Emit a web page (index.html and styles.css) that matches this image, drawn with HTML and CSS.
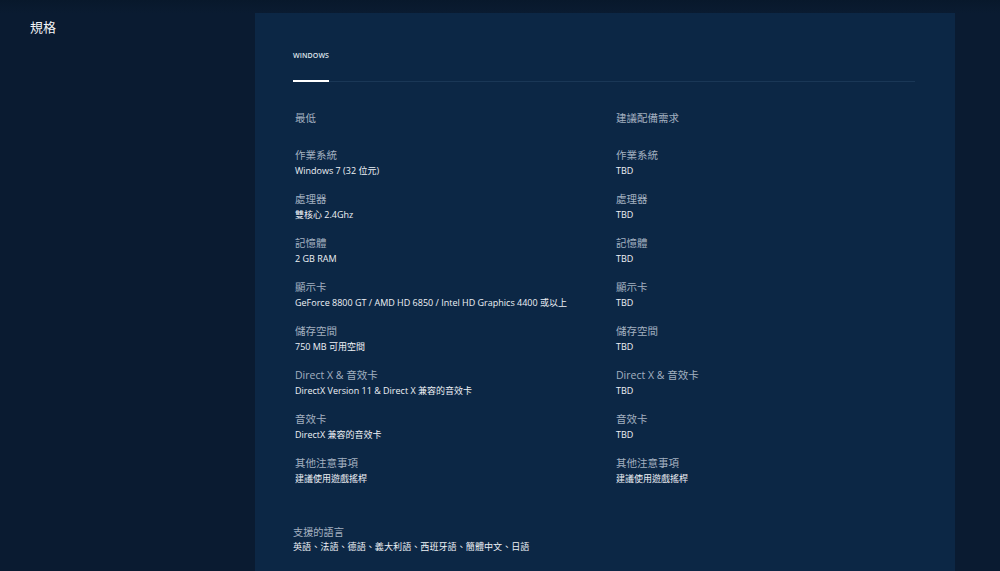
FILE: index.html
```html
<!DOCTYPE html>
<html lang="zh-Hant">
<head>
<meta charset="utf-8">
<title>規格</title>
<link rel="stylesheet" href="styles.css">
</head>
<body>
<div class="page">
  <aside class="side">
    <h1 class="title">規格</h1>
  </aside>
  <main class="panel">
    <nav class="tabs">
      <div class="tab active">WINDOWS</div>
    </nav>
    <div class="cols">
      <section class="col">
        <h2 class="col-head">最低</h2>
        <dl class="specs">
          <div class="spec"><dt>作業系統</dt><dd>Windows 7 (32 位元)</dd></div>
          <div class="spec"><dt>處理器</dt><dd>雙核心 2.4Ghz</dd></div>
          <div class="spec"><dt>記憶體</dt><dd>2 GB RAM</dd></div>
          <div class="spec"><dt>顯示卡</dt><dd>GeForce 8800 GT / AMD HD 6850 / Intel HD Graphics 4400 或以上</dd></div>
          <div class="spec"><dt>儲存空間</dt><dd>750 MB 可用空間</dd></div>
          <div class="spec"><dt>Direct X &amp; 音效卡</dt><dd>DirectX Version 11 &amp; Direct X 兼容的音效卡</dd></div>
          <div class="spec"><dt>音效卡</dt><dd>DirectX 兼容的音效卡</dd></div>
          <div class="spec"><dt>其他注意事項</dt><dd>建議使用遊戲搖桿</dd></div>
        </dl>
      </section>
      <section class="col">
        <h2 class="col-head">建議配備需求</h2>
        <dl class="specs">
          <div class="spec"><dt>作業系統</dt><dd>TBD</dd></div>
          <div class="spec"><dt>處理器</dt><dd>TBD</dd></div>
          <div class="spec"><dt>記憶體</dt><dd>TBD</dd></div>
          <div class="spec"><dt>顯示卡</dt><dd>TBD</dd></div>
          <div class="spec"><dt>儲存空間</dt><dd>TBD</dd></div>
          <div class="spec"><dt>Direct X &amp; 音效卡</dt><dd>TBD</dd></div>
          <div class="spec"><dt>音效卡</dt><dd>TBD</dd></div>
          <div class="spec"><dt>其他注意事項</dt><dd>建議使用遊戲搖桿</dd></div>
        </dl>
      </section>
    </div>
    <div class="langs">
      <div class="langs-label">支援的語言</div>
      <div class="langs-value">英語、法語、德語、義大利語、西班牙語、簡體中文、日語</div>
    </div>
  </main>
</div>
</body>
</html>
```

FILE: styles.css
```css
* { box-sizing: border-box; }
html, body {
  margin: 0;
  padding: 0;
  height: 100%;
}
body {
  background: #0a1b31;
  font-family: "Open Sans", "Noto Sans CJK TC", sans-serif;
  color: #e8ecf1;
  overflow: hidden;
}
.page {
  display: flex;
  height: 571px;
  padding-top: 13px;
  background: linear-gradient(to bottom, #08182b 0, #0a1b31 13px);
}
.side {
  width: 255px;
  flex: none;
  padding-left: 30px;
}
.title {
  margin: 6px 0 0;
  font-size: 13px;
  line-height: 16px;
  font-weight: 400;
  color: #f2f4f7;
}
.panel {
  width: 700px;
  flex: none;
  background: #0c2745;
  padding: 38px 40px 0 38px;
}
.tabs {
  border-bottom: 1px solid #1a3756;
  display: flex;
}
.tab {
  font-size: 7px;
  line-height: 10px;
  font-weight: 600;
  letter-spacing: 0.1px;
  color: #dfe5ec;
  padding-bottom: 19px;
  border-bottom: 2px solid #ffffff;
  margin-bottom: -1px;
  width: 36px;
}
.cols {
  display: flex;
  padding-left: 2px;
  margin-top: 29px;
}
.col {
  width: 321px;
  flex: none;
}
.col-head {
  margin: 0;
  font-size: 10.5px;
  line-height: 14px;
  font-weight: 400;
  color: #a3b0c0;
}
.specs {
  margin: 23px 0 0;
  display: flex;
  flex-direction: column;
  gap: 14px;
}
.spec dt {
  font-size: 10.5px;
  line-height: 14px;
  color: #a3b0c0;
}
.spec dd {
  margin: 2px 0 0;
  font-size: 9px;
  line-height: 14px;
  color: #eef1f5;
  font-weight: 400;
  white-space: nowrap;
}
.langs {
  margin-top: 39px;
}
.langs-label {
  font-size: 10.2px;
  line-height: 14px;
  color: #a3b0c0;
}
.langs-value {
  font-size: 9.1px;
  line-height: 16px;
  color: #eef1f5;
}
```
